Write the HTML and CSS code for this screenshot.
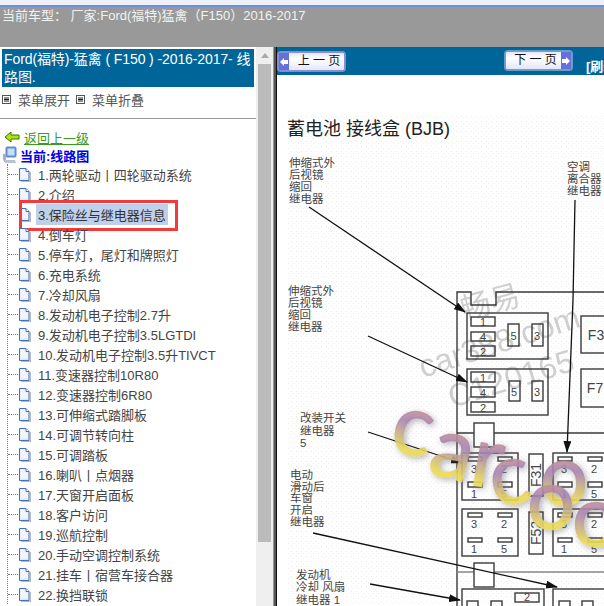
FILE: index.html
```html
<!DOCTYPE html>
<html lang="zh">
<head>
<meta charset="utf-8">
<title>线路图</title>
<link rel="stylesheet" href="styles.css">
</head>
<body>
<div class="topstrip"></div>
<header class="carbar">当前车型： 厂家:Ford(福特)猛禽（F150）2016-2017</header>
<main class="split">
  <aside class="sidebar">
    <div class="sidecontent">
      <h1 class="sidetitle">Ford(福特)-猛禽 ( F150 ) -2016-2017- 线路图.</h1>
      <div class="menutools">
        <span class="tool"><svg class="boxicon" viewBox="0 0 9 9"><rect x=".5" y=".5" width="8" height="8" fill="#fff" stroke="#555"/><path d="M2 3h5M2 4.500h5M2 6h5" stroke="#222"/></svg>菜单展开</span>
        <span class="tool"><svg class="boxicon" viewBox="0 0 9 9"><rect x=".5" y=".5" width="8" height="8" fill="#fff" stroke="#555"/><path d="M2 3h5M2 4.500h5M2 6h5" stroke="#222"/></svg>菜单折叠</span>
      </div>
      <hr class="rule">
      <div class="backrow">
        <svg class="backicon" viewBox="0 0 16 12"><path d="M1 6 7 1v3h8v4H7v3z" fill="#b6e000" stroke="#2f7a00"/></svg>
        <a class="backlink" href="#">返回上一级</a>
      </div>
      <div class="current">
        <svg class="pcicon" viewBox="0 0 16 18"><rect x="4" y="1" width="10" height="10" rx="1" fill="#5a8fe0" stroke="#6f8ab0"/><rect x="5.500" y="2.500" width="7" height="7" fill="#bfe0ff"/><path d="M1 8c2-1 3 0 3 3v5H2C1 14 1 11 1 8z" fill="#9fb0c8"/><path d="M3 14h10l1 3H3z" fill="#b8c2d0"/></svg>
        <strong>当前:线路图</strong>
      </div>
      <ul class="tree">
        <li class="node"><svg class="doc" viewBox="0 0 13 15"><use href="#docicon"/></svg><span class="label">1.两轮驱动丨四轮驱动系统</span></li>
        <li class="node"><svg class="doc" viewBox="0 0 13 15"><use href="#docicon"/></svg><span class="label">2.介绍</span></li>
        <li class="node"><svg class="doc" viewBox="0 0 13 15"><use href="#docicon"/></svg><span class="label selected">3.保险丝与继电器信息</span><span class="redbox"></span></li>
        <li class="node"><svg class="doc" viewBox="0 0 13 15"><use href="#docicon"/></svg><span class="label">4.倒车灯</span></li>
        <li class="node"><svg class="doc" viewBox="0 0 13 15"><use href="#docicon"/></svg><span class="label">5.停车灯，尾灯和牌照灯</span></li>
        <li class="node"><svg class="doc" viewBox="0 0 13 15"><use href="#docicon"/></svg><span class="label">6.充电系统</span></li>
        <li class="node"><svg class="doc" viewBox="0 0 13 15"><use href="#docicon"/></svg><span class="label">7.冷却风扇</span></li>
        <li class="node"><svg class="doc" viewBox="0 0 13 15"><use href="#docicon"/></svg><span class="label">8.发动机电子控制2.7升</span></li>
        <li class="node"><svg class="doc" viewBox="0 0 13 15"><use href="#docicon"/></svg><span class="label">9.发动机电子控制3.5LGTDI</span></li>
        <li class="node"><svg class="doc" viewBox="0 0 13 15"><use href="#docicon"/></svg><span class="label">10.发动机电子控制3.5升TIVCT</span></li>
        <li class="node"><svg class="doc" viewBox="0 0 13 15"><use href="#docicon"/></svg><span class="label">11.变速器控制10R80</span></li>
        <li class="node"><svg class="doc" viewBox="0 0 13 15"><use href="#docicon"/></svg><span class="label">12.变速器控制6R80</span></li>
        <li class="node"><svg class="doc" viewBox="0 0 13 15"><use href="#docicon"/></svg><span class="label">13.可伸缩式踏脚板</span></li>
        <li class="node"><svg class="doc" viewBox="0 0 13 15"><use href="#docicon"/></svg><span class="label">14.可调节转向柱</span></li>
        <li class="node"><svg class="doc" viewBox="0 0 13 15"><use href="#docicon"/></svg><span class="label">15.可调踏板</span></li>
        <li class="node"><svg class="doc" viewBox="0 0 13 15"><use href="#docicon"/></svg><span class="label">16.喇叭丨点烟器</span></li>
        <li class="node"><svg class="doc" viewBox="0 0 13 15"><use href="#docicon"/></svg><span class="label">17.天窗开启面板</span></li>
        <li class="node"><svg class="doc" viewBox="0 0 13 15"><use href="#docicon"/></svg><span class="label">18.客户访问</span></li>
        <li class="node"><svg class="doc" viewBox="0 0 13 15"><use href="#docicon"/></svg><span class="label">19.巡航控制</span></li>
        <li class="node"><svg class="doc" viewBox="0 0 13 15"><use href="#docicon"/></svg><span class="label">20.手动空调控制系统</span></li>
        <li class="node"><svg class="doc" viewBox="0 0 13 15"><use href="#docicon"/></svg><span class="label">21.挂车丨宿营车接合器</span></li>
        <li class="node"><svg class="doc" viewBox="0 0 13 15"><use href="#docicon"/></svg><span class="label">22.换挡联锁</span></li>
      </ul>
    </div>
    <div class="scrollbar">
      <div class="scrollup"></div>
      <div class="thumb"></div>
    </div>
  </aside>
  <div class="divider"></div>
  <section class="viewer">
    <nav class="pager">
      <a class="pagebtn prev" href="#"><span class="cap"><svg viewBox="0 0 8 8" class="capicon"><path d="M0 4 4 0v2h4v4H4v2z" fill="#fff"/></svg></span><span class="pagetext">上 一 页</span></a>
      <a class="pagebtn next" href="#"><span class="pagetext">下 一 页</span><span class="cap"><svg viewBox="0 0 8 8" class="capicon"><path d="M8 4 4 0v2H0v4h4v2z" fill="#fff"/></svg></span></a>
      <span class="refresh">[刷新]</span>
    </nav>
    <svg class="diagram" viewBox="277 75 327 531" xmlns="http://www.w3.org/2000/svg">
      <defs>
        <symbol id="docicon" viewBox="0 0 13 15"><path d="M3 14.500h9.500V5" fill="none" stroke="#b4b8c8" stroke-width="1.500"/><path d="M1.500 1.500h6.500l3 3v9h-9.500z" fill="#dfe9fb" stroke="#4a70b4"/><path d="M2.500 2.500h5v3h2.500v6h-7.500z" fill="#f1f6fe"/><path d="M8 1.500v3h3" fill="#fff" stroke="#4a70b4"/></symbol>
        <pattern id="grain" width="5" height="5" patternUnits="userSpaceOnUse"><rect x="1" y="1" width="1" height="1" fill="#ececec"/><rect x="3" y="3" width="1" height="1" fill="#f1f1f1"/></pattern>
        <marker id="head" markerWidth="12" markerHeight="8" refX="11" refY="4" orient="auto" markerUnits="userSpaceOnUse"><path d="M0 0 12 4 0 8z" fill="#111"/></marker>
        <linearGradient id="swirl" x1="0" y1="0" x2="0" y2="1"><stop offset=".2" stop-color="#f0a468"/><stop offset=".5" stop-color="#a884b4"/><stop offset=".78" stop-color="#ecdc58"/><stop offset="1" stop-color="#f0e060"/></linearGradient>
        <filter id="soft" x="-30%" y="-30%" width="160%" height="160%"><feGaussianBlur in="SourceGraphic" stdDeviation=".7" result="b"/><feDropShadow in="b" dx="2" dy="2" stdDeviation="3" flood-color="#556" flood-opacity=".5"/></filter>
      </defs>
      <rect x="288" y="115" width="316" height="491" fill="url(#grain)"/>
      <text class="dtitle" x="287" y="135">蓄电池 接线盒 (BJB)</text>

      <g class="wm">
        <text class="wmcjk" transform="translate(464 320) rotate(-15)">畅易</text>
        <text class="wmlat" transform="translate(423 378) rotate(-18)">car388.com</text>
        <text class="wmlat" transform="translate(452 408) rotate(-17)">C120165</text>
      </g>

      <g class="lbl">
        <text x="289" y="167">伸缩式外</text><text x="289" y="179">后视镜</text><text x="289" y="191">缩回</text><text x="289" y="203">继电器</text>
        <text x="567" y="171">空调</text><text x="567" y="183">离合器</text><text x="567" y="195">继电器</text>
        <text x="288" y="295">伸缩式外</text><text x="288" y="307">后视镜</text><text x="288" y="319">缩回</text><text x="288" y="331">继电器</text>
        <text x="300" y="422">改装开关</text><text x="300" y="435">继电器</text><text x="300" y="447">5</text>
        <text x="290" y="479">电动</text><text x="290" y="491">滑动后</text><text x="290" y="502">车窗</text><text x="290" y="514">开启</text><text x="290" y="526">继电器</text>
        <text x="296" y="579">发动机</text><text x="296" y="591">冷却 风扇</text><text x="296" y="604">继电器 1</text>
      </g>

      <g class="box">
        <path d="M457 606V292h14v13h25v-13h108"/>
        <rect x="467" y="313" width="81" height="46"/>
        <rect x="471" y="317" width="24" height="9"/><rect x="471" y="332" width="24" height="9"/><rect x="471" y="346" width="24" height="10"/>
        <rect x="508" y="324" width="11" height="22"/><rect x="532" y="324" width="11" height="22"/>
        <rect x="467" y="369" width="81" height="46"/>
        <rect x="471" y="372" width="24" height="10"/><rect x="471" y="387" width="24" height="10"/><rect x="471" y="402" width="24" height="10"/>
        <rect x="509" y="381" width="11" height="20"/><rect x="532" y="381" width="11" height="20"/>
        <rect x="581" y="316" width="30" height="37"/><rect x="581" y="369" width="30" height="38"/>
        <path d="M457 433h17M494 433h110"/>
        <rect x="474" y="423" width="20" height="24" fill="#fff"/>
        <rect x="462" y="453" width="56" height="47"/><rect x="529" y="454" width="14" height="42"/><rect x="553" y="453" width="56" height="47"/>
        <rect x="462" y="509" width="56" height="47"/><rect x="529" y="512" width="14" height="42"/><rect x="553" y="509" width="56" height="47"/>
        <path class="thin" d="M457 572h17M494 572h110"/>
        <rect x="474" y="563" width="20" height="24" fill="#fff"/>
        <rect x="462" y="589" width="82" height="30"/><rect x="515" y="593" width="24" height="9"/>
        <rect x="467" y="601" width="11" height="12"/><rect x="491" y="601" width="11" height="12"/>
        <rect x="553" y="589" width="60" height="30"/><rect x="559" y="601" width="11" height="12"/><rect x="582" y="601" width="11" height="12"/>
      </g>
      <g class="box term">
        <rect x="468" y="457" width="14" height="4"/><rect x="498" y="457" width="14" height="4"/><rect x="468" y="482" width="14" height="5"/><rect x="498" y="482" width="14" height="5"/>
        <rect x="558" y="457" width="14" height="4"/><rect x="588" y="457" width="14" height="4"/><rect x="558" y="482" width="14" height="5"/><rect x="588" y="482" width="14" height="5"/>
        <rect x="468" y="513" width="14" height="4"/><rect x="498" y="513" width="14" height="4"/><rect x="468" y="538" width="14" height="4"/><rect x="498" y="538" width="14" height="4"/>
        <rect x="558" y="513" width="14" height="4"/><rect x="588" y="513" width="14" height="4"/><rect x="558" y="538" width="14" height="4"/><rect x="588" y="538" width="14" height="4"/>
      </g>
      <g class="num">
        <text x="483" y="326">1</text><text x="483" y="341">4</text><text x="483" y="356">2</text><text x="513.500" y="340">5</text><text x="537" y="340">3</text>
        <text x="483" y="382">1</text><text x="483" y="397">4</text><text x="483" y="412">2</text><text x="514" y="396">5</text><text x="537" y="396">3</text>
        <text x="474" y="473">3</text><text x="504" y="473">2</text><text x="474" y="498">1</text><text x="504" y="498">5</text>
        <text x="564" y="473">3</text><text x="594" y="473">2</text><text x="564" y="498">1</text><text x="594" y="498">5</text>
        <text x="474" y="528">3</text><text x="504" y="528">2</text><text x="474" y="553">1</text><text x="504" y="553">5</text>
        <text x="564" y="528">3</text><text x="594" y="528">2</text><text x="564" y="553">1</text><text x="594" y="553">5</text>
        <text x="527" y="601">2</text>
        <text class="fuse" x="596" y="340">F3</text><text class="fuse" x="595" y="393">F7</text>
        <text class="fuse" transform="translate(541 475) rotate(-90)">F31</text>
        <text class="fuse" transform="translate(541 533) rotate(-90)">F52</text>
      </g>
      <g class="arrows">
        <path d="M309 207 465 312" marker-end="url(#head)"/>
        <path d="M368 336 467 382" marker-end="url(#head)"/>
        <path d="M368 432 462 463" marker-end="url(#head)"/>
        <path d="M313 533 557 587" marker-end="url(#head)"/>
        <path d="M370 584 460 600" marker-end="url(#head)"/>
        <path d="M575 200 573 300 567 452" marker-end="url(#head)"/>
      </g>
      <g class="logo" filter="url(#soft)">
        <text transform="translate(388 450) rotate(12)">c</text>
        <text transform="translate(426 472) rotate(15)">a</text>
        <text transform="translate(468 484) rotate(10)">r</text>
        <text transform="translate(494 507) rotate(-10)">c</text>
        <text transform="translate(540 505)">o</text>
        <text transform="translate(527 529)">o</text>
        <text transform="translate(572 546)">o</text>
      </g>
    </svg>
  </section>
</main>
</body>
</html>
```
FILE: styles.css
```css
* { box-sizing: border-box; }
html, body { margin: 0; height: 100%; overflow: hidden; }
body {
  width: 604px;
  height: 606px;
  display: flex;
  flex-direction: column;
  font-family: "Liberation Sans", "Noto Sans CJK SC", sans-serif;
  font-size: 13px;
  background: #fff;
}
.topstrip {
  height: 7px;
  flex: none;
  background: linear-gradient(#eef1fb 0 5px, #6f8fd8 5px 7px);
}
.carbar {
  height: 40px;
  flex: none;
  background: #999;
  color: #f2f2f2;
  font-size: 13px;
  line-height: 17px;
  padding: 0 2px;
  white-space: pre;
}
.split { flex: 1; display: flex; min-height: 0; }
.sidebar { width: 273px; flex: none; display: flex; overflow: hidden; }
.sidecontent { width: 256px; flex: none; padding: 2px 2px 0; }
.sidetitle {
  margin: 0;
  width: 252px;
  height: 38px;
  padding: 1px 0 1px 2px;
  background: #006699;
  color: #fff;
  font-size: 14px;
  font-weight: normal;
  line-height: 18px;
  letter-spacing: -.1px;
}
.menutools { display: flex; gap: 6px; height: 25px; align-items: center; color: #555; }
.tool { display: flex; align-items: center; gap: 7px; }
.boxicon { width: 9px; height: 9px; }
.rule { margin: 6px 0 0 -2px; width: 256px; height: 1px; border: 0; background: #999; }
.backrow { display: flex; align-items: center; gap: 4px; height: 18px; margin-top: 9px; margin-left: 2px; }
.backicon { width: 16px; height: 12px; }
.backlink { color: #3c9a1e; text-decoration: underline; }
.current { display: flex; align-items: center; gap: 2px; height: 18px; color: #0000e0; }
.pcicon { width: 16px; height: 18px; }
.current strong { font-weight: bold; font-size: 13px; }
.tree {
  list-style: none;
  padding: 0;
  margin: 0 0 0 5px;
  border-left: 1px dotted #777;
}
.node { position: relative; display: flex; align-items: center; height: 20px; white-space: nowrap; color: #444; }
.node::before { content: ""; width: 10px; border-top: 1px dotted #777; flex: none; }
.doc { width: 13px; height: 15px; flex: none; }
.label { margin-left: 7px; }
.selected { background: #bfd0ea; margin-left: 5px; padding: 1px 2px; color: #333; }
.redbox {
  position: absolute;
  left: 11px;
  top: -4px;
  width: 159px;
  height: 31px;
  border: 3px solid #f33b3b;
}
.scrollbar { width: 17px; flex: none; background: #efefef; padding: 0 2px; }
.scrollup { height: 17px; position: relative; }
.scrollup::before {
  content: "";
  position: absolute;
  left: 3px;
  top: 6px;
  border: 4px solid transparent;
  border-top: 0;
  border-bottom: 5px solid #aaa;
  width: 0;
  height: 0;
}
.thumb { height: 478px; background: #bbb; }
.divider { width: 4px; flex: none; background: linear-gradient(90deg, #999 0 1px, #555 1px 3px, #111 3px); }
.viewer { flex: 1; min-width: 0; display: flex; flex-direction: column; overflow: hidden; }
.pager {
  height: 28px;
  flex: none;
  background: #006699;
  display: flex;
  align-items: flex-start;
  color: #fff;
  white-space: nowrap;
  overflow: hidden;
}
.pagebtn {
  width: 67px;
  height: 19px;
  display: flex;
  align-items: stretch;
  flex: none;
  background: linear-gradient(#e6e8fb, #ffffff 35%, #e4e6fa);
  border: 1px solid #8a90d8;
  border-radius: 2px;
  color: #111;
  text-decoration: none;
  box-shadow: 0 0 0 .5px #cdd2f4;
}
.prev { margin: 5px 0 0 1px; }
.next { margin: 4px 0 0 160px; }
.prev .pagetext { padding-left: 5px; }
.next .pagetext { padding-left: 4px; }
.cap { width: 10px; background: #6670dc; display: flex; align-items: center; justify-content: center; flex: none; }
.capicon { width: 8px; height: 8px; }
.pagetext { flex: 1; text-align: center; font-size: 12px; line-height: 17px; }
.refresh { margin: 9px 0 0 14px; font-weight: bold; font-size: 13px; flex: none; }
.diagram { width: 327px; height: 531px; display: block; flex: none; }
.dtitle { font-size: 18px; fill: #222; }
.lbl text { font-size: 11.500px; fill: #444; }
.box rect, .box path { fill: none; stroke: #3a3a3a; stroke-width: 1.400; }
.box rect[fill="#fff"] { fill: #fff; }
.box .thin { stroke: #888; }
.term rect { fill: #fff; }
.num text { font-size: 11px; fill: #444; text-anchor: middle; }
.num .fuse { font-size: 14px; }
.arrows path { fill: none; stroke: #111; stroke-width: 1.300; }
.wm text { fill: #c4c4c4; opacity: .8; }
.wmcjk { font-size: 30px; }
.wmlat { font-size: 32px; }
.logo text { font-size: 85px; font-family: "Lato", "Liberation Sans", sans-serif; fill: url(#swirl); stroke: url(#swirl); stroke-width: 1.500; fill-opacity: .85; stroke-opacity: .85; }
```
